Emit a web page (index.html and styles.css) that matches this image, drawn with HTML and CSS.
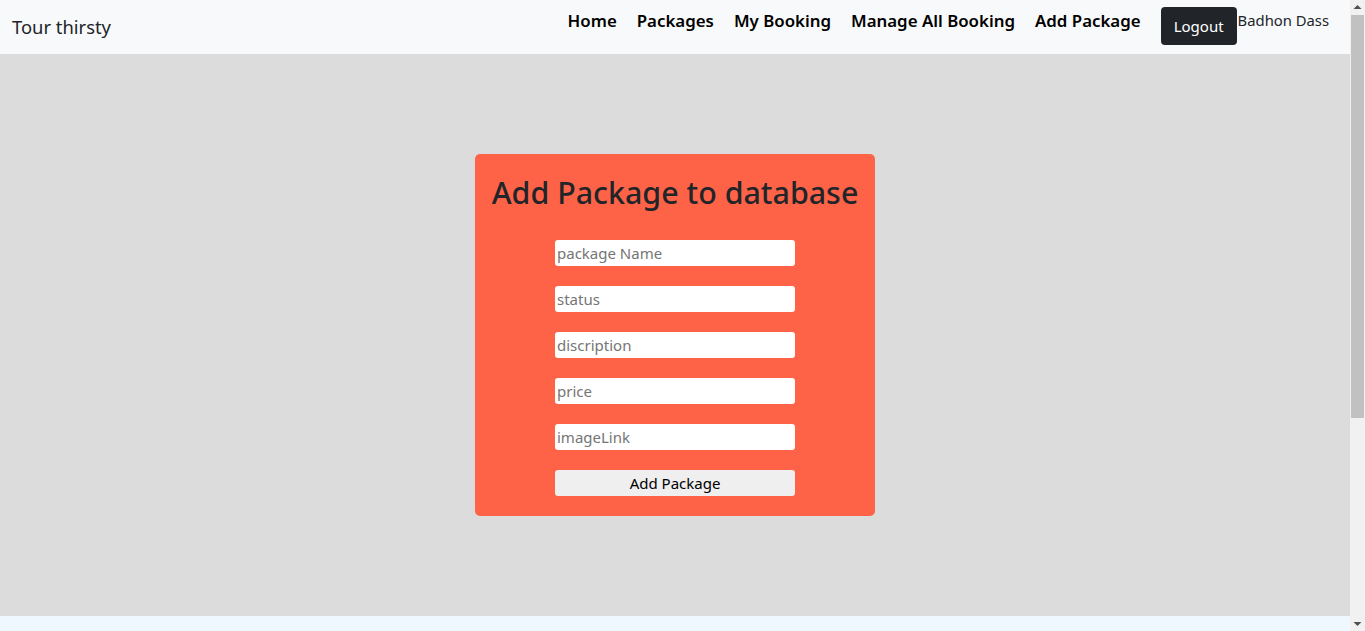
FILE: index.html
```html
<!DOCTYPE html>
<html lang="en">
<head>
<meta charset="utf-8">
<title>Tour thirsty</title>
<link rel="stylesheet" href="styles.css">
</head>
<body>
<div class="page">
  <header class="navbar">
    <a class="brand" href="#">Tour thirsty</a>
    <nav class="nav">
      <a class="nav-link" href="#">Home</a>
      <a class="nav-link" href="#">Packages</a>
      <a class="nav-link" href="#">My Booking</a>
      <a class="nav-link" href="#">Manage All Booking</a>
      <a class="nav-link" href="#">Add Package</a>
      <button class="logout" type="button">Logout</button>
      <span class="user">Badhon Dass</span>
    </nav>
  </header>
  <main class="stage">
    <section class="card">
      <h2 class="card-title">Add Package to database</h2>
      <form class="form">
        <input class="field" type="text" placeholder="package Name">
        <input class="field" type="text" placeholder="status">
        <input class="field" type="text" placeholder="discription">
        <input class="field" type="text" placeholder="price">
        <input class="field" type="text" placeholder="imageLink">
        <button class="submit" type="button">Add Package</button>
      </form>
    </section>
  </main>
  <footer class="footer"></footer>
</div>
<div class="scrollbar" aria-hidden="true">
  <div class="sb-button">
    <svg width="15" height="15" viewBox="0 0 15 15"><polygon points="3.5,9 11.5,9 7.5,5" fill="#505050"/></svg>
  </div>
  <div class="sb-track">
    <div class="sb-thumb"></div>
  </div>
  <div class="sb-button">
    <svg width="15" height="15" viewBox="0 0 15 15"><polygon points="3.5,6 11.5,6 7.5,10" fill="#505050"/></svg>
  </div>
</div>
</body>
</html>
```

FILE: styles.css
```css
* { box-sizing: border-box; }
html, body { margin: 0; padding: 0; }
body {
  display: flex;
  height: 100vh;
  overflow: hidden;
  font-family: "Noto Sans", "Open Sans", sans-serif;
  color: #212529;
  background: #f0f8ff;
}
.page {
  flex: 1;
  min-width: 0;
  height: 100vh;
  overflow: hidden;
}
.scrollbar {
  width: 15px;
  flex: 0 0 15px;
  height: 100vh;
  display: flex;
  flex-direction: column;
  background: #f1f1f1;
}
.sb-button {
  height: 15px;
  flex: 0 0 15px;
}
.sb-button svg { display: block; }
.sb-track {
  flex: 1;
  padding: 0 1px;
}
.sb-thumb {
  height: 403px;
  background: #c1c1c1;
}
.navbar {
  display: flex;
  align-items: flex-start;
  height: 54px;
  background: #f8f9fa;
  padding: 0 21px 0 12px;
}
.brand {
  font-size: 18.4px;
  color: #212529;
  text-decoration: none;
  margin-top: 13px;
  line-height: 28px;
}
.nav {
  margin-left: auto;
  display: flex;
  align-items: flex-start;
}
.nav-link {
  font-size: 16.85px;
  font-weight: 600;
  color: #000;
  text-decoration: none;
  line-height: 24px;
  margin-top: 9px;
  margin-right: 20px;
}
.logout {
  margin-top: 7px;
  height: 38px;
  width: 76px;
  border: none;
  border-radius: 4px;
  background: #212529;
  color: #fff;
  font-family: inherit;
  font-size: 15px;
  padding: 0;
}
.user {
  font-size: 14.8px;
  line-height: 20px;
  margin-top: 10px;
  margin-left: 1px;
}
.stage {
  background: #dcdcdc;
  padding: 100px 0;
  height: 562px;
}
.card {
  width: 400px;
  height: 362px;
  margin: 0 auto;
  background: #ff6347;
  border-radius: 5px;
  padding: 20px 0;
  display: flex;
  flex-direction: column;
  align-items: center;
}
.card-title {
  margin: 0 0 28px;
  font-size: 30.4px;
  font-weight: 500;
  line-height: 38px;
  color: #212529;
}
.form {
  display: flex;
  flex-direction: column;
  gap: 20px;
  width: 240px;
}
.field {
  height: 26px;
  border: none;
  border-radius: 3px;
  background: #fff;
  padding: 0 2px;
  font-family: inherit;
  font-size: 15px;
}
.field::placeholder { color: #757575; }
.submit {
  height: 26px;
  border: none;
  border-radius: 3px;
  background: #efefef;
  color: #000;
  font-family: inherit;
  font-size: 15px;
  padding: 0;
}
.footer {
  height: 326px;
  background: #f0f8ff;
}
```
